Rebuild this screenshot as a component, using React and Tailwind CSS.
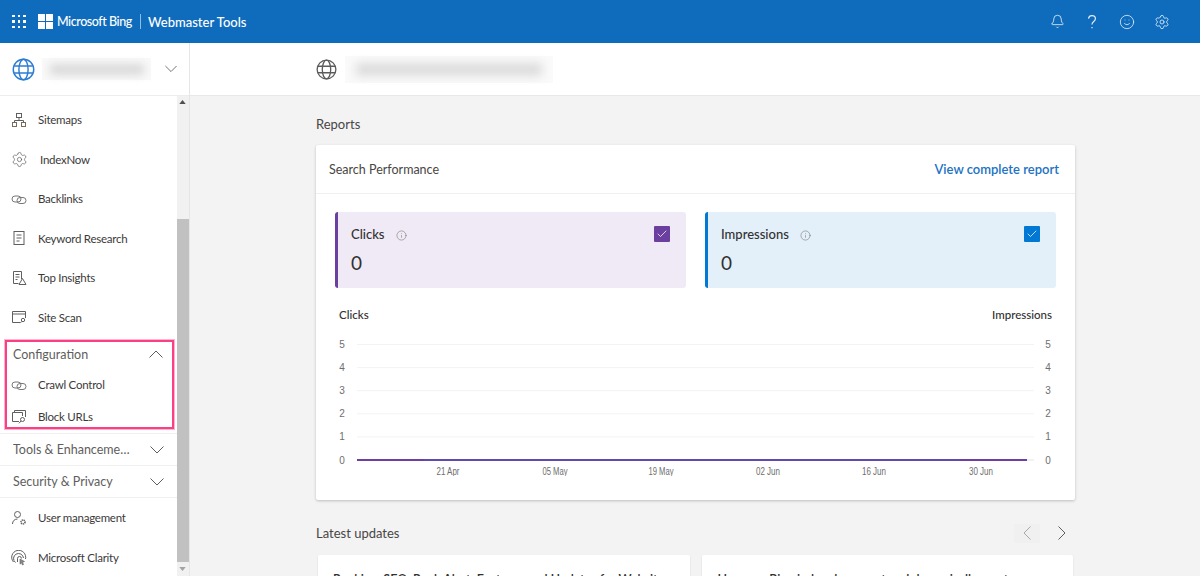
import { Settings, Smile, Bell, Check, Info } from "lucide-react";

function Ico({ children, className = "" }) {
  return (
    <svg viewBox="0 0 16 16" width="16" height="16" fill="none" stroke="#5f5f5f" strokeWidth="1" className={"shrink-0 " + className}>
      {children}
    </svg>
  );
}

const SitemapIcon = () => (
  <Ico>
    <rect x="5.5" y="1.5" width="5" height="4" />
    <rect x="1.5" y="10.5" width="4" height="4" stroke="#7a6a58" />
    <rect x="10.5" y="10.5" width="4" height="4" stroke="#7a6a58" />
    <path d="M8 5.500v3M3.500 10.500v-2h9v2" />
  </Ico>
);
const LinkIcon = () => (
  <Ico>
    <rect x="1" y="5" width="9" height="6" rx="3" stroke="#777" />
    <rect x="6" y="6.5" width="9" height="6" rx="3" stroke="#777" />
  </Ico>
);
const DocIcon = () => (
  <Ico>
    <rect x="3" y="1.5" width="10" height="13" />
    <path d="M5.500 5h5M5.500 8h5M5.500 11h3" />
  </Ico>
);
const InsightIcon = () => (
  <Ico>
    <path d="M10.500 9V1.500h-8v12h5" />
    <path d="M4.500 4.500h4M4.500 7h4M4.500 9.500h2" />
    <path d="M11.500 8.500l3.500 6H8z" />
  </Ico>
);
const ScanIcon = () => (
  <Ico>
    <path d="M9 13.500H1.500v-11h13V9" />
    <path d="M1.500 5h13" />
    <circle cx="12" cy="11" r="1.700" />
    <path d="M10.800 12.400l-1.600 1.700" />
  </Ico>
);
const BlockIcon = () => (
  <Ico>
    <path d="M3.500 3V1.500h11V8" />
    <path d="M8 12.500H1.500V3.500h10V7" />
    <circle cx="11.500" cy="10.500" r="2" />
    <path d="M10 12l-2 2.300" />
  </Ico>
);
const UserIcon = () => (
  <Ico>
    <circle cx="6.500" cy="4.500" r="3" />
    <path d="M1.500 14c0-3 2-5 5-5" />
    <circle cx="12" cy="12" r="2" strokeWidth="1.600" strokeDasharray="1.200 0.600" />
  </Ico>
);
const ClarityIcon = () => (
  <Ico>
    <path d="M2.500 12A7 7 0 1 1 14.500 9" />
    <path d="M4.500 12.500A5 5 0 1 1 12.500 8" />
    <path d="M6.500 12V8.500a2 2 0 0 1 4 0" />
    <path d="M9 9l4.500 2.500-2 .8 1 2.200-1 .5-1-2.200-1.500 1.300z" fill="#8a8a8a" stroke="#5f5f5f" strokeWidth="0.6" />
  </Ico>
);

function GlobeIcon({ size, color }) {
  return (
    <svg viewBox="0 0 24 24" width={size} height={size} fill="none" stroke={color} strokeWidth="1.5" className="shrink-0">
      <circle cx="12" cy="12" r="10.700" />
      <ellipse cx="12" cy="12" rx="4.800" ry="10.700" />
      <path d="M2.200 8.300h19.600M2.200 15.700h19.600" />
    </svg>
  );
}

// wide flat chevrons, the lucide ones are too small at this height
function Chev({ up, color = "#605e5c", className = "" }) {
  return (
    <svg viewBox="0 0 14 8" width="14" height="8" fill="none" stroke={color} strokeWidth="1" className={"shrink-0 " + className}>
      <path d={up ? "M0.500 7.500L7 1l6.500 6.500" : "M0.500 0.500L7 7l6.500-6.500"} />
    </svg>
  );
}

function ChevSide({ left, color }) {
  return (
    <svg viewBox="0 0 8 14" width="8" height="14" fill="none" stroke={color} strokeWidth="1" className="shrink-0">
      <path d={left ? "M7.500 0.500L1 7l6.500 6.500" : "M0.500 0.500L7 7l-6.500 6.500"} />
    </svg>
  );
}

function NavItem({ icon, label, className = "h-[39.5px]", labelClass = "" }) {
  return (
    <div className={"flex items-center pl-[11px] " + className}>
      {icon}
      <span className={"ml-[11px] text-[11.5px] tracking-[-0.25px] text-[#3b3a39] " + labelClass}>{label}</span>
    </div>
  );
}

function GroupRow({ label }) {
  return (
    <div className="flex h-8 items-center justify-between border-t border-[#efefef] pl-[13px] pr-[13px]">
      <span className="w-[122px] truncate pt-[2px] text-[12.5px] text-[#605e5c]">{label}</span>
      <Chev />
    </div>
  );
}

function Sidebar() {
  return (
    <aside className="flex w-[190px] shrink-0 flex-col border-r border-[#e6e6e6] bg-white">
      <div className="flex h-[53px] shrink-0 items-center border-b border-[#ececec] pl-[12px]">
        <GlobeIcon size={23} color="#2b7cd3" />
        <div className="ml-[7px] flex h-[22px] w-[109px] items-center justify-center bg-[#f9f9f9]">
          <div className="h-[11px] w-[94px] bg-[#d9d9d9] blur-[4px]" />
        </div>
        <Chev className="ml-[14px] w-[12px]" />
      </div>
      <div className="flex min-h-0 flex-1">
        <div className="w-[177px] shrink-0 pt-[5px]">
          <NavItem icon={<SitemapIcon />} label="Sitemaps" className="h-[38.5px] pb-[1px]" />
          <NavItem
            icon={<Settings size={17} strokeWidth={1} color="#5f5f5f" className="shrink-0" />}
            label="IndexNow"
            labelClass="ml-[12px]"
          />
          <NavItem icon={<LinkIcon />} label="Backlinks" />
          <NavItem icon={<DocIcon />} label="Keyword Research" />
          <NavItem icon={<InsightIcon />} label="Top Insights" />
          <NavItem icon={<ScanIcon />} label="Site Scan" />

          {/* highlighted group */}
          <div className="ml-[5px] mt-[3px] h-[89px] w-[169px] overflow-hidden border-2 border-[#fb3f85] ring-1 ring-[#fb3f85]/40">
            <div className="flex h-6 items-center justify-between pl-[6px] pr-[9px]">
              <span className="pt-[2px] text-[12.5px] text-[#605e5c]">Configuration</span>
              <Chev up />
            </div>
            <NavItem icon={<LinkIcon />} label="Crawl Control" className="mt-[3px] h-8 !pl-[4px]" />
            <NavItem icon={<BlockIcon />} label="Block URLs" className="h-8 !pl-[4px]" />
          </div>

          <div className="mt-[4px]">
            <GroupRow label="Tools & Enhancements" />
            <GroupRow label="Security & Privacy" />
          </div>
          <div className="border-t border-[#efefef]">
            <NavItem icon={<UserIcon />} label="User management" className="h-[40px]" />
            <NavItem icon={<ClarityIcon />} label="Microsoft Clarity" className="h-[40px]" />
          </div>
        </div>

        {/* scrollbar */}
        <div className="relative h-full w-3 bg-[#f1f1f1]">
          <svg viewBox="0 0 8 5" width="7" height="4" className="absolute left-[2px] top-[4px]">
            <path d="M0 5L4 0l4 5z" fill="#505050" />
          </svg>
          <div className="mt-[123px] h-[343px] bg-[#c1c1c1]" />
          <svg viewBox="0 0 8 5" width="7" height="4" className="absolute bottom-[5px] left-[2px]">
            <path d="M0 0l4 5 4-5z" fill="#a3a3a3" />
          </svg>
        </div>
      </div>
    </aside>
  );
}

function TopBar() {
  return (
    <header className="flex h-[43px] shrink-0 items-center bg-[#0f6cbd] text-white">
      <div className="ml-[12px] grid w-[14px] grid-cols-3 gap-[3px]">
        {[0, 1, 2, 3, 4, 5, 6, 7, 8].map((i) => (
          <span key={i} className="h-[2.5px] w-[2.5px] bg-white" />
        ))}
      </div>
      <div className="ml-[12px] grid grid-cols-2 gap-[1px]">
        <span className="h-[7px] w-[7px] bg-white" />
        <span className="h-[7px] w-[7px] bg-white" />
        <span className="h-[7px] w-[7px] bg-white" />
        <span className="h-[7px] w-[7px] bg-white" />
      </div>
      <span className="ml-[4px] w-[75px] whitespace-nowrap pt-[2px] text-[12.5px] font-medium tracking-[-0.45px]">Microsoft Bing</span>
      <span className="ml-[8px] h-[15px] w-px bg-[#8fbce3]" />
      <span className="ml-[7px] pt-[2px] text-[13px] font-medium">Webmaster Tools</span>
      <div className="ml-auto mr-[30px] flex items-center gap-[19px] text-[#e6f0fa]">
        <Bell size={15} strokeWidth={1.3} />
        <svg viewBox="0 0 16 16" width="16" height="16" fill="none" stroke="currentColor" strokeWidth="1.2">
          <path d="M4.500 4.600C4.800 2.800 6.200 1.700 8 1.700c2 0 3.400 1.300 3.400 3 0 1.400-.8 2.200-1.900 3C8.500 8.400 8 9 8 10.500" />
          <path d="M8 13v1.200" />
        </svg>
        <Smile size={16} strokeWidth={1.2} />
        <Settings size={16} strokeWidth={1.2} />
      </div>
    </header>
  );
}

function Metric({ label, tone, bar, box }) {
  return (
    <div className={"relative h-[76px] w-[351px] rounded-[3px] border-l-[3px] pl-[13px] pt-[14px] " + tone + " " + bar}>
      <div className="flex h-[18px] items-center text-[13px] font-medium text-[#323130]">
        {label}
        <Info size={11} strokeWidth={1.2} color="#707070" className="ml-[11px]" />
      </div>
      <div className="mt-[7px] text-[19px] leading-[24px] text-[#323130]">0</div>
      <div className={"absolute right-[16px] top-[14px] flex h-4 w-4 items-center justify-center rounded-[1px] " + box}>
        <Check size={12} strokeWidth={1.5} color="#fff" />
      </div>
    </div>
  );
}

function Chart() {
  const ticks = [0, 1, 2, 3, 4, 5];
  const dates = [
    ["21 Apr", 113, 23],
    ["05 May", 220, 25],
    ["19 May", 326, 25],
    ["02 Jun", 433, 24],
    ["16 Jun", 539, 24],
    ["30 Jun", 646, 24],
  ];
  const font = { fontFamily: "Liberation Sans, Arial, sans-serif" };
  return (
    <svg width="721" height="146" viewBox="0 0 721 146" className="block">
      {ticks.map((t) => {
        const y = 130 - t * 23.1;
        return (
          <g key={t} style={font} fontSize="10" fill="#6e6e6e">
            {t > 0 && <line x1="22" x2="699" y1={y} y2={y} stroke="#f3f3f3" />}
            <text x="7" y={y + 3.5} textAnchor="middle">{t}</text>
            <text x="713" y={y + 3.5} textAnchor="middle">{t}</text>
          </g>
        );
      })}
      <line x1="22" x2="699" y1="130" y2="130" stroke="#e4e4e4" />
      <line x1="22" x2="692" y1="130" y2="130" stroke="#5f4bb0" strokeWidth="2" />
      <line x1="22" x2="89" y1="130" y2="130" stroke="#6f3ea3" strokeWidth="2" />
      <line x1="625" x2="692" y1="130" y2="130" stroke="#6f3ea3" strokeWidth="2" />
      {dates.map(([d, x, w]) => (
        <text
          key={d}
          x={x}
          y="145"
          textAnchor="middle"
          fontSize="10"
          textLength={w}
          lengthAdjust="spacingAndGlyphs"
          fill="#6e6e6e"
          style={font}
        >
          {d}
        </text>
      ))}
    </svg>
  );
}

function Reports() {
  return (
    <div className="overflow-hidden rounded-[2px] bg-white shadow-[0_1px_3px_rgba(0,0,0,0.22)]">
      <div className="flex h-[49px] items-center justify-between border-b border-[#efefef] pl-[13px] pr-[16px] pt-[2px]">
        <span className="text-[12.5px] text-[#484644]">Search Performance</span>
        <span className="text-[13px] font-semibold text-[#2272c3]">View complete report</span>
      </div>
      <div className="px-[19px] pb-[24px] pt-[18px]">
        <div className="flex gap-[19px]">
          <Metric label="Clicks" tone="bg-[#f0eaf6]" bar="border-[#6b3fa0]" box="bg-[#6b3fa0]" />
          <Metric label="Impressions" tone="bg-[#e3f0fa]" bar="border-[#0078d4]" box="bg-[#0078d4]" />
        </div>
        <div className="mt-[18px] flex h-[18px] items-center justify-between px-[4px] text-[11.5px] font-medium text-[#323130]">
          <span>Clicks</span>
          <span>Impressions</span>
        </div>
        <div className="mt-[6px]">
          <Chart />
        </div>
      </div>
    </div>
  );
}

export default function App() {
  return (
    <div
      className="flex h-[576px] w-[1200px] flex-col overflow-hidden bg-[#f3f3f3]"
      style={{ fontFamily: 'Lato, "Open Sans", sans-serif' }}
    >
      <TopBar />
      <div className="flex min-h-0 flex-1">
        <Sidebar />
        <main className="min-w-0 flex-1">
          <div className="flex h-[53px] items-center border-b border-[#e8e8e8] bg-white pl-[126px]">
            <GlobeIcon size={21} color="#5c5c5c" />
            <div className="ml-[8px] flex h-[27px] w-[208px] items-center justify-center bg-[#fafafa]">
              <div className="h-[13px] w-[186px] bg-[#dcdcdc] blur-[5px]" />
            </div>
          </div>
          <div className="ml-[126px] w-[759px]">
            <div className="pt-[19px] text-[13px] leading-[18px] text-[#484644]">Reports</div>
            <div className="mt-[12px]">
              <Reports />
            </div>
            <div className="mt-[23px] flex h-[20px] items-center justify-between">
              <span className="pt-[2px] text-[13px] text-[#484644]">Latest updates</span>
              <div className="flex items-center gap-[18px] pr-[9px]">
                <span className="flex h-[19px] w-[26px] items-center justify-center bg-[#f0f0f0]">
                  <ChevSide left color="#a8a8a8" />
                </span>
                <ChevSide color="#605e5c" />
              </div>
            </div>
            <div className="mt-[12px] grid grid-cols-2 gap-[12px] px-[2px]">
              <div className="h-[120px] rounded-[2px] bg-white pl-[15px] pt-[16px] shadow-[0_1px_2px_rgba(0,0,0,0.12)]">
                <p className="truncate pr-[12px] text-[12.5px] font-semibold text-[#323130]">
                  Ranking, SEO, Rank Alert, Features and Updates for Website Owners
                </p>
              </div>
              <div className="h-[120px] rounded-[2px] bg-white pl-[16px] pt-[16px] shadow-[0_1px_2px_rgba(0,0,0,0.12)]">
                <p className="truncate pr-[12px] text-[12.5px] font-semibold text-[#323130]">
                  How can Bing index document and dynamically create your sitemap
                </p>
              </div>
            </div>
          </div>
        </main>
      </div>
    </div>
  );
}
